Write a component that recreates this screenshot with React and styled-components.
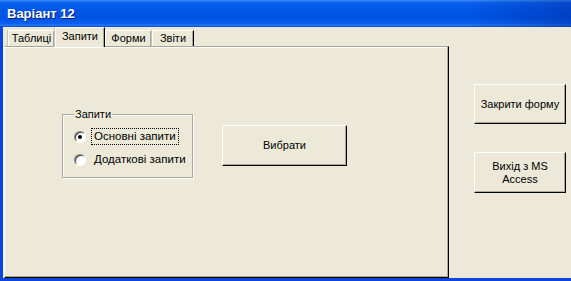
import React from "react";
import styled, { createGlobalStyle } from "styled-components";

const Global = createGlobalStyle`
  html, body { margin: 0; padding: 0; background: #ECE9D8; }
  body { font-family: "Liberation Sans", Arial, sans-serif; font-size: 11px; color: #000; }
`;

const Window = styled.div`
  width: 571px;
  height: 281px;
  display: flex;
  flex-direction: column;
  background: #ECE9D8;
  overflow: hidden;
`;

const TitleBar = styled.div`
  height: 27px;
  flex: none;
  display: flex;
  align-items: center;
  padding-left: 7px;
  color: #fff;
  font-family: "Liberation Sans", Arial, sans-serif;
  font-weight: bold;
  font-size: 13px;
  background:
    linear-gradient(90deg, rgba(0, 0, 0, 0) 82%, rgba(0, 20, 120, 0.3) 100%),
    linear-gradient(180deg, #3b8cf8 0%, #0a5fec 10%, #0057e8 35%, #0053e2 65%, #0a60f0 88%, #2a78f6 93%, #0049d2 100%);
  text-shadow: 1px 1px 0 #0a1e7a;
`;

const Frame = styled.div`
  flex: 1;
  display: flex;
  border-left: 3px solid #0b45dc;
  border-bottom: 3px solid #0b45dc;
  min-height: 0;
`;

const TabArea = styled.div`
  width: 446px;
  flex: none;
  display: flex;
  flex-direction: column;
  padding-left: 1px;
  box-sizing: border-box;
`;

const TabStrip = styled.div`
  height: 19px;
  flex: none;
  display: flex;
  align-items: flex-end;
  padding-left: 4px;
  position: relative;
  z-index: 1;
`;

const Tab = styled.div`
  box-sizing: border-box;
  width: ${(p) => p.$w}px;
  height: ${(p) => (p.$active ? "20px" : "16px")};
  margin-bottom: ${(p) => (p.$active ? "-1px" : "0")};
  padding-top: ${(p) => (p.$active ? "2px" : "1px")};
  background: #ECE9D8;
  border-top: 1px solid #fff;
  border-left: 1px solid #fff;
  border-right: 1px solid #000;
  box-shadow: inset -1px 0 0 #aca899, -1px 0 0 #c9c6b6;
  line-height: 13px;
  text-align: center;
  white-space: nowrap;
  position: relative;
  z-index: ${(p) => (p.$active ? 2 : 0)};
`;

const Panel = styled.div`
  flex: 1;
  box-sizing: border-box;
  border-top: 1px solid #a7a594;
  border-left: 1px solid #fff;
  border-right: 1px solid #000;
  border-bottom: 1px solid #000;
  box-shadow: inset -1px -1px 0 #aca899, inset 0 1px 0 #fff;
  padding: 61px 0 0 57px;
`;

const PanelRow = styled.div`
  display: flex;
  align-items: flex-start;
`;

const GroupBox = styled.fieldset`
  margin: 0;
  width: 131px;
  min-width: 0;
  flex: none;
  box-sizing: border-box;
  padding: 7px 4px 9px 11px;
  border: 1px solid #aca899;
  box-shadow: inset 1px 1px 0 #fff, 1px 1px 0 #fff;
  display: flex;
  flex-direction: column;
  gap: 6px;
`;

const Legend = styled.legend`
  padding: 0 1px;
  line-height: 13px;
`;

const RadioRow = styled.label`
  display: flex;
  align-items: center;
  height: 17px;
`;

const RadioCircle = styled.span`
  width: 12px;
  height: 12px;
  box-sizing: border-box;
  border-radius: 50%;
  border: 1px solid;
  border-color: #808080 #fff #fff #808080;
  background: #fff;
  box-shadow: inset 1px 1px 0 #404040;
  display: flex;
  align-items: center;
  justify-content: center;
  flex: none;
  &::after {
    content: "";
    width: 4px;
    height: 4px;
    border-radius: 50%;
    background: ${(p) => (p.$checked ? "#000" : "transparent")};
  }
`;

const RadioLabel = styled.span`
  margin-left: 5px;
  padding: 1px 2px;
  line-height: 13px;
  font-size: 11.5px;
  border: 1px dotted ${(p) => (p.$focus ? "#000" : "transparent")};
  white-space: nowrap;
`;

const Button = styled.div`
  box-sizing: border-box;
  width: ${(p) => p.$w}px;
  height: ${(p) => p.$h}px;
  margin: ${(p) => p.$m || "0"};
  display: flex;
  align-items: center;
  justify-content: center;
  text-align: center;
  line-height: 13px;
  background: #ECE9D8;
  border: 1px solid;
  border-color: #fff #000 #000 #fff;
  box-shadow: inset -1px -1px 0 #aca899;
  flex: none;
`;

const Side = styled.div`
  flex: 1;
  display: flex;
  flex-direction: column;
  gap: 28px;
  padding: 57px 0 0 25px;
`;

export default function App() {
  return (
    <>
      <Global />
      <Window>
        <TitleBar>Варіант 12</TitleBar>
        <Frame>
          <TabArea>
            <TabStrip>
              <Tab $w={47}>Таблиці</Tab>
              <Tab $w={50} $active>Запити</Tab>
              <Tab $w={47}>Форми</Tab>
              <Tab $w={42}>Звіти</Tab>
            </TabStrip>
            <Panel>
              <PanelRow>
                <GroupBox>
                  <Legend>Запити</Legend>
                  <RadioRow>
                    <RadioCircle $checked />
                    <RadioLabel $focus>Основні запити</RadioLabel>
                  </RadioRow>
                  <RadioRow>
                    <RadioCircle />
                    <RadioLabel>Додаткові запити</RadioLabel>
                  </RadioRow>
                </GroupBox>
                <Button $w={125} $h={41} $m="17px 0 0 29px">Вибрати</Button>
              </PanelRow>
            </Panel>
          </TabArea>
          <Side>
            <Button $w={92} $h={40}>Закрити форму</Button>
            <Button $w={92} $h={41}>
              Вихід з MS
              <br />
              Access
            </Button>
          </Side>
        </Frame>
      </Window>
    </>
  );
}
